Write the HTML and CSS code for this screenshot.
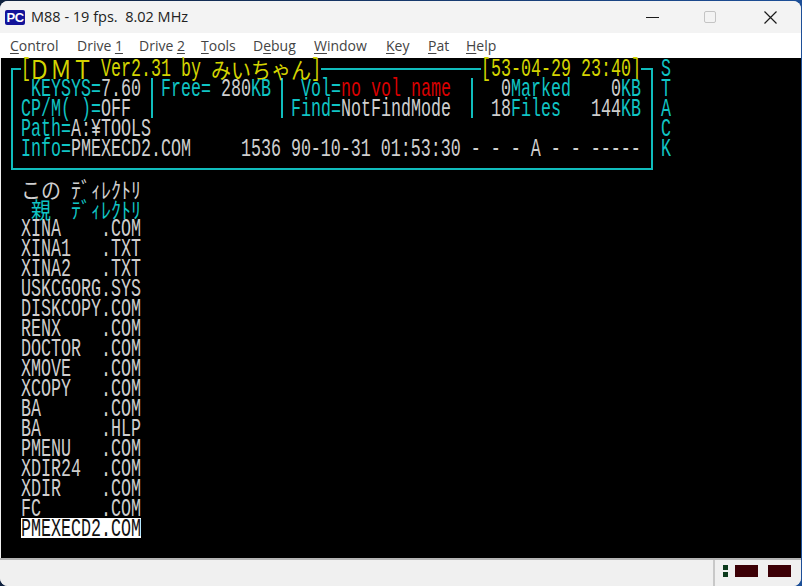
FILE: index.html
```html
<!DOCTYPE html>
<html lang="ja">
<head>
<meta charset="utf-8">
<title>M88</title>
<link rel="stylesheet" href="styles.css">
</head>
<body>
<div class="window">
  <header class="titlebar">
    <div class="appicon">PC</div>
    <div class="title">M88 - 19 fps.&nbsp; 8.02 MHz</div>
    <div class="controls">
      <svg class="ctl ctl-min" width="13" height="13" viewBox="0 0 13 13"><path d="M0 6.5H13" stroke="#1a1a1a" stroke-width="1.2"/></svg>
      <div class="ctl ctl-max"></div>
      <svg class="ctl ctl-close" width="13" height="13" viewBox="0 0 13 13"><path d="M.5.5L12.5 12.5M12.5.5L.5 12.5" stroke="#1a1a1a" stroke-width="1.2"/></svg>
    </div>
  </header>
  <nav class="menubar">
    <span class="m m1"><u>C</u>ontrol</span>
    <span class="m m2">Drive <u>1</u></span>
    <span class="m m3">Drive <u>2</u></span>
    <span class="m m4"><u>T</u>ools</span>
    <span class="m m5">D<u>e</u>bug</span>
    <span class="m m6"><u>W</u>indow</span>
    <span class="m m7"><u>K</u>ey</span>
    <span class="m m8"><u>P</u>at</span>
    <span class="m m9"><u>H</u>elp</span>
  </nav>
  <main class="screen">
    <div class="top">
      <section class="panel">
        <div class="legend">
          <div class="y tag"><span class="a">[</span><span class="j big">ＤＭＴ</span><span class="a"> Ver2.31 by </span><span class="j">みいちゃん</span><span class="a">]</span></div>
          <div class="y tag"><span class="a">[53-04-29 23:40]</span></div>
        </div>
        <div class="cells">
          <div class="cell c1 c"><span class="a"> KEYSYS=<i>7.60</i></span></div>
          <div class="cell c2 c"><span class="a">Free=<i> 280</i>KB</span></div>
          <div class="cell c3 c"><span class="a"> Vol=<b>no vol name</b></span></div>
          <div class="cell c4 c"><span class="a">  <i>0</i>Marked    <i>0</i>KB</span></div>
          <div class="cell c1 c"><span class="a">CP/M( )=<i>OFF</i></span></div>
          <div class="cell c2"></div>
          <div class="cell c3 c"><span class="a">Find=<i>NotFindMode</i></span></div>
          <div class="cell c4 c"><span class="a"> <i>18</i>Files   <i>144</i>KB</span></div>
        </div>
        <div class="line c"><span class="a">Path=<i>A:¥TOOLS</i></span></div>
        <div class="line c"><span class="a">Info=<i>PMEXECD2.COM     1536 90-10-31 01:53:30 - - - A - - -----</i></span></div>
      </section>
      <aside class="stack c">
        <div><span class="a">S</span></div>
        <div><span class="a">T</span></div>
        <div><span class="a">A</span></div>
        <div><span class="a">C</span></div>
        <div><span class="a">K</span></div>
      </aside>
    </div>
    <ul class="files">
      <li class="w"><span class="j">この</span><span class="a"> </span><span class="j">ﾃﾞｨﾚｸﾄﾘ</span></li>
      <li class="c"><span class="a"> </span><span class="j">親</span><span class="a">  </span><span class="j">ﾃﾞｨﾚｸﾄﾘ</span></li>
      <li class="w"><span class="a">XINA    .COM</span></li>
      <li class="w"><span class="a">XINA1   .TXT</span></li>
      <li class="w"><span class="a">XINA2   .TXT</span></li>
      <li class="w"><span class="a">USKCGORG.SYS</span></li>
      <li class="w"><span class="a">DISKCOPY.COM</span></li>
      <li class="w"><span class="a">RENX    .COM</span></li>
      <li class="w"><span class="a">DOCTOR  .COM</span></li>
      <li class="w"><span class="a">XMOVE   .COM</span></li>
      <li class="w"><span class="a">XCOPY   .COM</span></li>
      <li class="w"><span class="a">BA      .COM</span></li>
      <li class="w"><span class="a">BA      .HLP</span></li>
      <li class="w"><span class="a">PMENU   .COM</span></li>
      <li class="w"><span class="a">XDIR24  .COM</span></li>
      <li class="w"><span class="a">XDIR    .COM</span></li>
      <li class="w"><span class="a">FC      .COM</span></li>
      <li class="sel"><span class="a">PMEXECD2.COM</span></li>
    </ul>
  </main>
  <footer class="status">
    <div class="status-main"></div>
    <div class="status-leds">
      <div class="dots"><span class="dot"></span><span class="dot"></span></div>
      <span class="led led-a"></span>
      <span class="led"></span>
    </div>
  </footer>
</div>
</body>
</html>
```

FILE: styles.css
```css
* { box-sizing: border-box; }
html, body { margin: 0; padding: 0; height: 100%; }
body {
  width: 802px;
  height: 586px;
  overflow: hidden;
  background: linear-gradient(90deg, #10223f, #1d4f98);
}
.window {
  width: 801px;
  height: 585px;
  margin-top: 1px;
  border-radius: 8px;
  overflow: hidden;
  background: #f0f0f0;
  display: flex;
  flex-direction: column;
}
.titlebar {
  height: 32px;
  flex: none;
  background: #f3f3f3;
  display: flex;
  align-items: center;
  padding-left: 5px;
}
.appicon {
  width: 20px;
  height: 15px;
  background: #14149a;
  color: #fff;
  border-radius: 2px;
  font: bold 13px/15px "Liberation Sans", sans-serif;
  letter-spacing: -0.5px;
  text-align: center;
  overflow: hidden;
}
.title {
  margin-left: 6px;
  font: 14.5px/32px "Open Sans", sans-serif;
  color: #222;
  white-space: pre;
}
.controls {
  margin-left: auto;
  display: flex;
  align-items: center;
  padding-right: 24px;
}
.ctl { display: block; flex: none; }
.ctl-max {
  width: 12px;
  height: 12px;
  margin: 0 48px 0 45px;
  border: 1px solid #c4c4c4;
  border-radius: 2px;
}
.menubar {
  height: 25px;
  flex: none;
  background: #fff;
  display: flex;
  align-items: center;
  padding-left: 10px;
  font: 14px/25px "Open Sans", sans-serif;
  color: #444;
  white-space: pre;
}
.m u { text-underline-offset: 2px; }
.m1 { width: 67px; }
.m2 { width: 62px; }
.m3 { width: 62px; }
.m4 { width: 52px; }
.m5 { width: 61px; }
.m6 { width: 72px; }
.m7 { width: 42px; }
.m8 { width: 38px; }
.screen {
  height: 500px;
  width: 800px;
  flex: none;
  margin-left: 1px;
  background: #000;
  color: #cfcfcf;
  font: 16.67px/20px "Liberation Mono", monospace;
}
.a {
  display: inline-block;
  white-space: pre;
  height: 20px;
  vertical-align: top;
  transform: translateY(2px) scaleY(1.5);
}
.a i { font-style: normal; color: #cfcfcf; }
.a b { font-weight: normal; color: #d80000; }
.j {
  font: 20px/20px "Noto Sans CJK JP", sans-serif;
  display: inline-block;
  white-space: pre;
  height: 20px;
  vertical-align: top;
  transform: translateY(1px) scaleY(1.1);
}
.j.big { transform: translateY(1px) scale(1.08, 1.3); }
.c { color: #10c4c4; }
.y { color: #d4d400; }
.w { color: #cfcfcf; }
.top { display: flex; align-items: flex-start; }
.panel {
  flex: none;
  width: 642px;
  height: 102px;
  margin: 10px 0 0 10px;
  border: 2px solid #10bcbc;
  padding-left: 8px;
}
.legend {
  display: flex;
  justify-content: space-between;
  margin: -12px 10px 0 0;
  height: 20px;
}
.tag { background: #000; height: 20px; display: flex; }
.cells {
  display: grid;
  grid-template-columns: 140px 130px 190px 1fr;
  grid-auto-rows: 20px;
  margin-left: -8px;
}
.line { height: 20px; }
.cell { padding-left: 8px; border-right: 2px solid #10bcbc; }
.cell.c4 { border-right: 0; }
.stack { margin-left: 8px; }
.stack div { height: 20px; }
.files {
  list-style: none;
  margin: 8px 0 0 20px;
  padding: 0;
  width: 120px;
}
.files li { height: 20px; display: flex; }
.files .sel { background: #fff; color: #111; }
.status {
  height: 28px;
  flex: none;
  display: flex;
  background: #f0f0f0;
  border-top: 2px solid #b4b4b4;
}
.status-main { flex: 1; }
.status-leds {
  width: 88px;
  border-left: 2px solid #c8c8c8;
  display: flex;
  align-items: center;
  padding: 0 0 4px 8px;
}
.dots { display: flex; flex-direction: column; gap: 2px; margin-right: 7px; }
.dot { width: 5px; height: 5px; background: #0c3a1c; display: block; }
.led { width: 23px; height: 12px; background: #3c0006; display: block; }
.led-a { margin-right: 10px; }
```
